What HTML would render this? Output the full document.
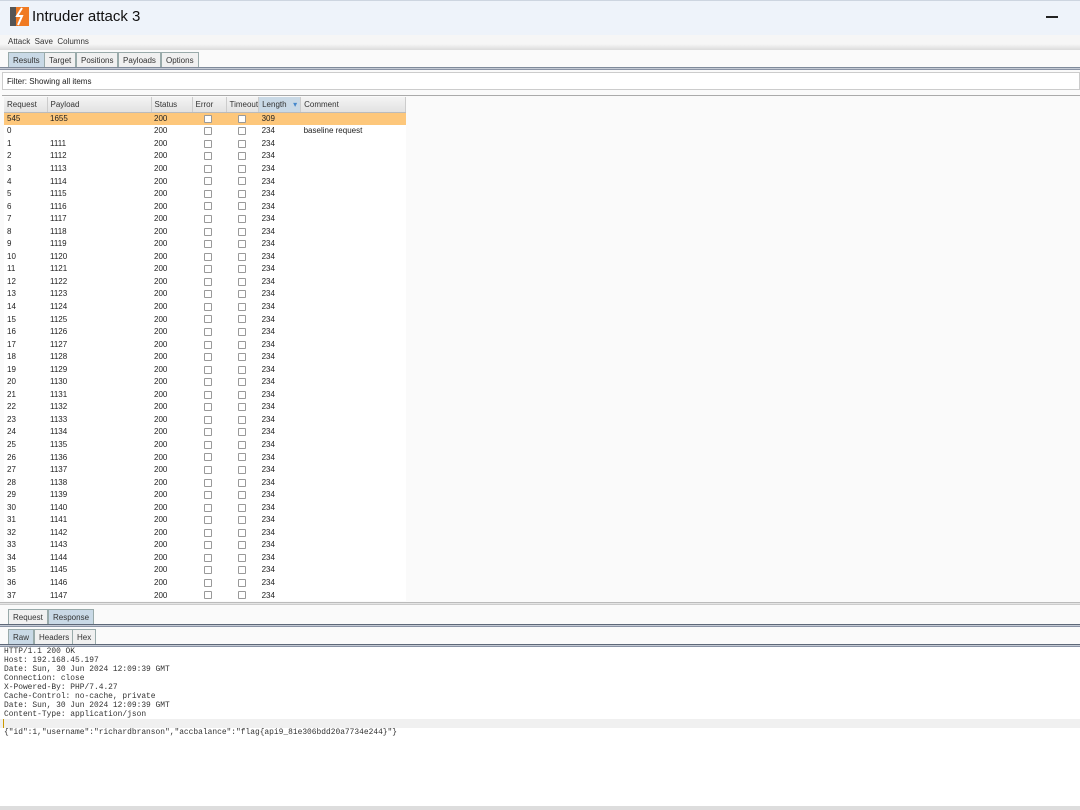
<!DOCTYPE html>
<html><head><style>
*{margin:0;padding:0;box-sizing:border-box}
body{width:1080px;height:810px;overflow:hidden;background:#fafafa;font-family:"Liberation Sans",sans-serif;font-size:8px;color:#222;position:relative}
.abs{position:absolute}
.tab{position:absolute;border:1px solid #9aa;border-bottom:none;background:#f0f0f0;height:15px;padding:3px 4px 0;font-size:8px;color:#333}
.tab.sel{background:#c9d9e6}
table{border-collapse:collapse;position:absolute;left:4px;top:97px;width:402px}
td{height:12.55px;padding:0 0 0 3px;font-size:8px;white-space:nowrap}
th{height:15px;font-weight:normal;text-align:left;padding-left:3px;background:linear-gradient(#f4f4f4,#e2e2e2);border-right:1px solid #ccc;border-bottom:1px solid #bbb;font-size:8px;color:#333}
.cb{display:inline-block;width:8px;height:8px;border:1px solid #999;background:#fff;border-radius:1px;vertical-align:middle}
.mono{font-family:"Liberation Mono",monospace;font-size:7.9px;line-height:9px;color:#333}
</style></head><body>
<div class="abs" style="left:0;top:0;width:1080px;height:35px;background:#eef3fa;border-top:1px solid #cdd5e0"></div>
<svg class="abs" style="left:10px;top:7px" width="19" height="19"><rect width="19" height="19" fill="#555"/><rect x="6" width="13" height="19" fill="#f07a22"/><path d="M12 1 L7 9 L12 9 L8 18" stroke="#fff" stroke-width="2" fill="none"/></svg>
<div class="abs" style="left:32px;top:8px;font-size:15px;color:#111">Intruder attack 3</div>
<div class="abs" style="left:1046px;top:16px;width:12px;height:1.5px;background:#222"></div>
<div class="abs" style="left:0;top:35px;width:1080px;height:15px;background:linear-gradient(#f6f6f6 60%,#dcdcdc)"></div>
<div class="abs" style="left:8px;top:37px;color:#333">Attack&nbsp; Save&nbsp; Columns</div>
<div class="tab sel" style="left:8px;top:52px">Results</div>
<div class="tab" style="left:44px;top:52px">Target</div>
<div class="tab" style="left:76px;top:52px">Positions</div>
<div class="tab" style="left:118px;top:52px">Payloads</div>
<div class="tab" style="left:161px;top:52px">Options</div>
<div class="abs" style="left:0;top:67px;width:1080px;height:3px;border-top:1px solid #7f8a9a;border-bottom:1px solid #8a93a5;background:#c4cad4"></div>
<div class="abs" style="left:2px;top:72px;width:1078px;height:18px;background:#fff;border:1px solid #ccc;padding:4px 4px">Filter: Showing all items</div>
<div class="abs" style="left:2px;top:95px;width:1078px;height:508px;border-top:1px solid #aaa;background:#fafafa"></div>
<table>
<tr><th style="width:43px">Request</th><th style="width:104px">Payload</th><th style="width:41px">Status</th><th style="width:34px">Error</th><th style="width:32px">Timeout</th><th style="width:42px;background:#c9d9e6">Length <span style="color:#48c;float:right;padding-right:3px">▾</span></th><th>Comment</th></tr>
<tbody id="tb">
<tr style="background:#fdc77b"><td>545</td><td>1655</td><td>200</td><td style="padding-left:12px"><span class="cb"></span></td><td style="padding-left:12px"><span class="cb"></span></td><td>309</td><td></td></tr>
<tr style="background:#fff"><td>0</td><td></td><td>200</td><td style="padding-left:12px"><span class="cb"></span></td><td style="padding-left:12px"><span class="cb"></span></td><td>234</td><td>baseline request</td></tr>
</tbody></table>
<script>
var tb=document.getElementById('tb'),h='';
for(var i=1;i<=37;i++){h+='<tr style="background:#fff"><td>'+i+'</td><td>'+(1110+i)+'</td><td>200</td><td style="padding-left:12px"><span class="cb"></span></td><td style="padding-left:12px"><span class="cb"></span></td><td>234</td><td></td></tr>';}
tb.insertAdjacentHTML('beforeend',h);
</script>
<div class="abs" style="left:0;top:602px;width:1080px;height:3px;border-top:1px solid #bbb;border-bottom:1px solid #ccc;background:#e4e4e4"></div>
<div class="tab" style="left:8px;top:609px">Request</div>
<div class="tab sel" style="left:48px;top:609px">Response</div>
<div class="abs" style="left:0;top:624px;width:1080px;height:3px;border-top:1px solid #5e6878;border-bottom:1px solid #8a93a5;background:#c4cad4"></div>
<div class="tab sel" style="left:8px;top:629px">Raw</div>
<div class="tab" style="left:34px;top:629px">Headers</div>
<div class="tab" style="left:72px;top:629px">Hex</div>
<div class="abs" style="left:0;top:644px;width:1080px;height:3px;border-top:1px solid #5e6878;border-bottom:1px solid #8a93a5;background:#c4cad4"></div>
<div class="abs" style="left:0;top:647px;width:1080px;height:160px;background:#fff"></div>
<div class="abs" style="left:0;top:719px;width:1080px;height:9px;background:#f0f0f0"></div>
<div class="abs" style="left:3px;top:719px;width:1px;height:9px;background:#c90"></div>
<div class="abs mono" style="left:4px;top:647px">HTTP/1.1 200 OK<br>Host: 192.168.45.197<br>Date: Sun, 30 Jun 2024 12:09:39 GMT<br>Connection: close<br>X-Powered-By: PHP/7.4.27<br>Cache-Control: no-cache, private<br>Date: Sun, 30 Jun 2024 12:09:39 GMT<br>Content-Type: application/json</div>
<div class="abs mono" style="left:4px;top:728px">{"id":1,"username":"richardbranson","accbalance":"flag{api9_81e306bdd20a7734e244}"}</div>
<div class="abs" style="left:0;top:806px;width:1080px;height:4px;background:#ddd"></div>
</body></html>
